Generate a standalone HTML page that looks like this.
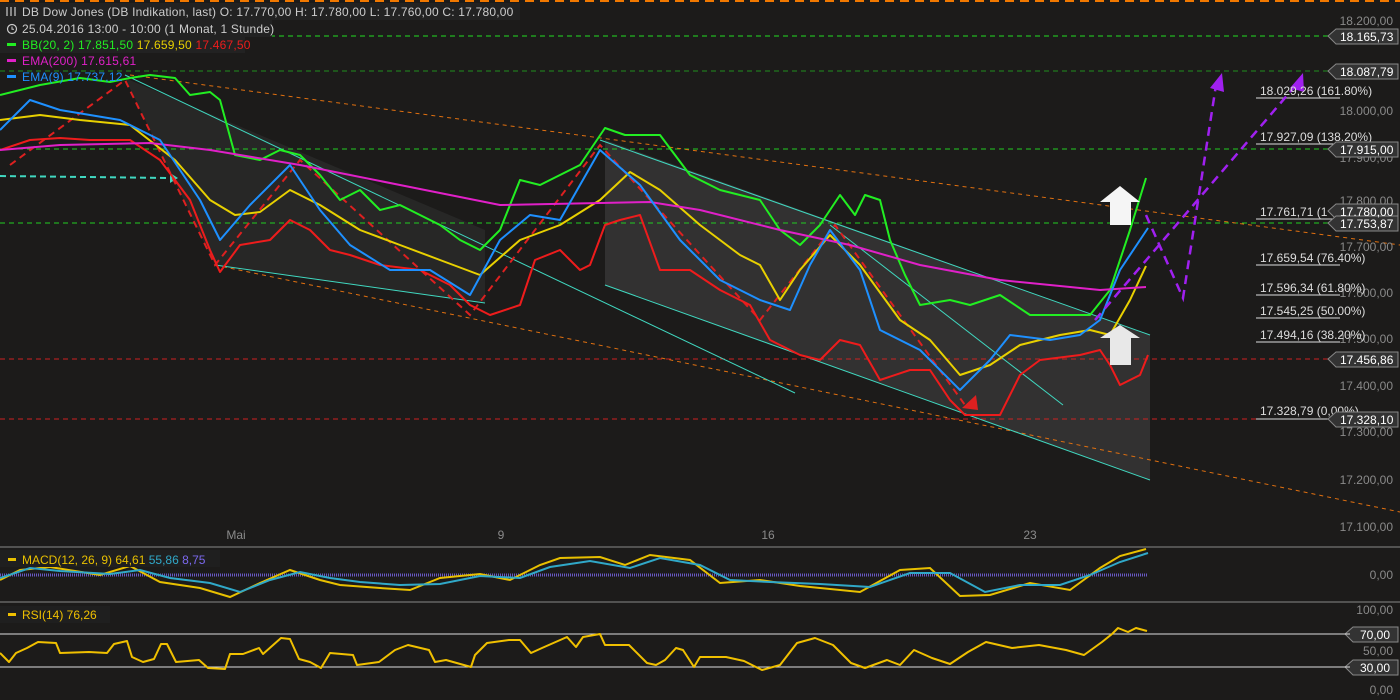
<!DOCTYPE html>
<html><head><meta charset="utf-8"><style>
html,body{margin:0;padding:0;background:#1c1b1a;overflow:hidden}
svg{display:block;font-family:"Liberation Sans",sans-serif}
</style></head><body>
<svg width="1400" height="700" viewBox="0 0 1400 700" xmlns="http://www.w3.org/2000/svg">
<rect width="1400" height="700" fill="#1c1b1a"/>
<line x1="0" y1="1" x2="1400" y2="1" stroke="#f07800" stroke-width="2" stroke-dasharray="9,6"/>
<polygon points="605,140 1150,335 1150,480 605,285" fill="#3a3a3a" opacity="0.75"/>
<polygon points="125,78 485,230 485,303 215,265" fill="#2c2c2c" opacity="0.7"/>
<g stroke-width="1" stroke-dasharray="5,4">
<line x1="0" y1="36" x2="1330" y2="36" stroke="#22dd22"/>
<line x1="0" y1="71" x2="1330" y2="71" stroke="#22dd22" stroke-opacity=".6"/>
<line x1="0" y1="149" x2="1330" y2="149" stroke="#22cc22"/>
<line x1="0" y1="223" x2="1330" y2="223" stroke="#22cc22"/>
<line x1="0" y1="359" x2="1330" y2="359" stroke="#cc2222"/>
<line x1="0" y1="419" x2="1330" y2="419" stroke="#cc2222"/>
</g>
<g stroke="#ddd" stroke-width="1">
<line x1="1256" y1="98" x2="1340" y2="98"/><line x1="1256" y1="144" x2="1340" y2="144"/>
<line x1="1256" y1="219" x2="1340" y2="219"/><line x1="1256" y1="265" x2="1340" y2="265"/>
<line x1="1256" y1="295" x2="1340" y2="295"/><line x1="1256" y1="318" x2="1340" y2="318"/>
<line x1="1256" y1="342" x2="1340" y2="342"/><line x1="1256" y1="419" x2="1340" y2="419"/>
</g>
<g stroke="#e07010" stroke-width="1" stroke-dasharray="4,4" fill="none">
<line x1="130" y1="75" x2="1400" y2="245"/>
<line x1="215" y1="265" x2="1400" y2="512"/>
</g>
<g stroke="#40d8c0" stroke-width="1" fill="none">
<line x1="125" y1="75" x2="795" y2="393"/>
<line x1="600" y1="140" x2="1150" y2="335"/>
<line x1="605" y1="285" x2="1150" y2="480"/>
<line x1="215" y1="265" x2="485" y2="303"/>
<line x1="830" y1="225" x2="1063" y2="405"/>
</g>
<line x1="0" y1="176" x2="170" y2="178" stroke="#40d8c0" stroke-width="2" stroke-dasharray="6,4"/>
<polygon points="170,173 178,178 170,183" fill="#40d8c0"/>
<polyline points="10,165 125,80 215,265 300,160 470,315 600,145 760,320 835,225 965,405" fill="none" stroke="#dd2020" stroke-width="2" stroke-dasharray="7,5"/>
<polygon points="962,408 976,395 978,410" fill="#dd2020"/>
<g fill="none" stroke-width="2" stroke-linejoin="round">
<polyline stroke="#22ee22" points="0,95 40,85 80,78 110,82 130,78 150,75 175,78 190,95 210,92 220,100 235,155 260,160 280,150 300,155 320,175 340,200 360,190 380,210 400,205 420,215 440,225 460,240 480,250 500,230 520,180 540,185 560,175 580,165 605,128 625,135 660,135 690,175 720,190 760,200 780,230 800,245 820,225 840,195 855,215 865,195 880,200 890,240 905,275 920,305 950,300 970,305 1000,295 1030,315 1060,315 1090,315 1110,290 1130,230 1146,178"/>
<polyline stroke="#ee1c1c" points="0,150 30,140 60,138 90,140 130,140 160,160 190,200 210,250 220,272 240,245 270,240 290,220 310,230 330,250 350,255 380,265 420,270 450,285 470,305 490,315 520,305 535,260 560,250 580,270 590,265 605,225 620,220 640,215 660,270 690,270 720,290 750,305 770,340 800,355 820,360 840,340 860,345 880,380 910,370 930,370 950,400 965,415 1000,415 1020,375 1040,360 1080,355 1100,350 1110,365 1120,385 1140,375 1148,355"/>
<polyline stroke="#e8d000" points="0,120 40,115 80,120 130,125 175,160 210,200 235,215 260,212 290,190 320,205 360,230 400,245 440,260 480,275 520,240 560,225 600,200 630,172 660,190 700,225 740,255 760,265 780,300 800,270 830,235 860,265 900,320 930,340 960,375 990,365 1020,345 1060,335 1090,330 1110,335 1130,300 1146,266"/>
<polyline stroke="#e020c8" points="0,150 60,145 150,143 210,150 300,165 400,185 500,205 600,203 650,202 700,210 780,230 850,245 920,265 1000,280 1050,285 1100,290 1146,287"/>
<polyline stroke="#1e90ff" points="0,130 30,100 60,110 120,120 160,140 200,200 220,240 250,205 290,165 320,210 350,245 390,270 430,270 470,295 500,240 530,215 560,220 600,150 640,185 680,240 720,280 760,300 790,310 810,265 830,230 860,270 880,330 920,350 960,390 990,360 1010,335 1050,340 1080,335 1100,320 1120,270 1148,228"/>
</g>
<g stroke="#a020f0" stroke-width="2.5" stroke-dasharray="9,6" fill="none">
<polyline points="1146,215 1183,298 1216,85"/>
<line x1="1095" y1="320" x2="1296" y2="85"/>
</g>
<polygon points="1210,88 1222,73 1224,92" fill="#a020f0"/>
<polygon points="1290,88 1303,73 1304,92" fill="#a020f0"/>
<polygon points="1100,202 1120,186 1140,202 1131,202 1131,225 1110,225 1110,202" fill="#f5f5f5"/>
<polygon points="1100,338 1120,325 1140,338 1131,338 1131,365 1110,365 1110,338" fill="#e8e8e8"/>
<g fill="#8a8a8a" font-size="12" text-anchor="end">
<text x="1393" y="25">18.200,00</text><text x="1393" y="115">18.000,00</text>
<text x="1393" y="162">17.900,00</text><text x="1393" y="205">17.800,00</text>
<text x="1393" y="251">17.700,00</text><text x="1393" y="297">17.600,00</text>
<text x="1393" y="343">17.500,00</text><text x="1393" y="390">17.400,00</text>
<text x="1393" y="436">17.300,00</text><text x="1393" y="484">17.200,00</text>
<text x="1393" y="531">17.100,00</text>
<text x="1393" y="579">0,00</text><text x="1393" y="614">100,00</text>
<text x="1393" y="655">50,00</text><text x="1393" y="694">0,00</text>
</g>
<g fill="#dddddd" font-size="12">
<text x="1260" y="95">18.029,26 (161.80%)</text><text x="1260" y="141">17.927,09 (138.20%)</text>
<text x="1260" y="216">17.761,71 (1</text><text x="1260" y="262">17.659,54 (76.40%)</text>
<text x="1260" y="292">17.596,34 (61.80%)</text><text x="1260" y="315">17.545,25 (50.00%)</text>
<text x="1260" y="339">17.494,16 (38.20%)</text><text x="1260" y="415">17.328,79 (0,00%)</text>
</g>
<g font-size="12" fill="#fff">
<g fill="#333" stroke="#888">
<polygon points="1328,36 1336,29 1398,29 1398,44 1336,44"/>
<polygon points="1328,71 1336,64 1398,64 1398,79 1336,79"/>
<polygon points="1328,149 1336,142 1398,142 1398,157 1336,157"/>
<polygon points="1328,211 1336,204 1398,204 1398,219 1336,219"/>
<polygon points="1328,223 1336,216 1398,216 1398,231 1336,231"/>
<polygon points="1328,359 1336,352 1398,352 1398,367 1336,367"/>
<polygon points="1328,419 1336,412 1398,412 1398,427 1336,427"/>
<polygon points="1345,634 1353,627 1398,627 1398,642 1353,642"/>
<polygon points="1345,667 1353,660 1398,660 1398,675 1353,675"/>
</g>
<text x="1340" y="41">18.165,73</text><text x="1340" y="76">18.087,79</text>
<text x="1340" y="154">17.915,00</text><text x="1340" y="216">17.780,00</text>
<text x="1340" y="228">17.753,87</text><text x="1340" y="364">17.456,86</text>
<text x="1340" y="424">17.328,10</text><text x="1360" y="639">70,00</text><text x="1360" y="672">30,00</text>
</g>
<rect x="0" y="3" width="520" height="17" fill="#222"/>
<rect x="0" y="20" width="272" height="17" fill="#222"/>
<rect x="0" y="37" width="245" height="16" fill="#222"/>
<g font-size="12" letter-spacing="0.2">
<text x="22" y="16" fill="#ccc">DB Dow Jones (DB Indikation, last)  O: 17.770,00  H: 17.780,00  L: 17.760,00  C: 17.780,00</text>
<g stroke="#ccc" stroke-width="1.2"><line x1="7" y1="7" x2="7" y2="16"/><line x1="11" y1="7" x2="11" y2="16"/><line x1="15" y1="7" x2="15" y2="16"/></g>
<circle cx="12" cy="29" r="4.5" fill="none" stroke="#ccc" stroke-width="1.2"/>
<path d="M12 26.5v2.8h2" fill="none" stroke="#ccc" stroke-width="1"/>
<text x="22" y="33" fill="#ccc">25.04.2016 13:00 - 10:00 (1 Monat, 1 Stunde)</text>
<rect x="7" y="43" width="9" height="3" fill="#22ee22"/>
<text x="22" y="49" fill="#22ee22">BB(20, 2)  17.851,50  <tspan fill="#e8d000">17.659,50</tspan>  <tspan fill="#ee1c1c">17.467,50</tspan></text>
<rect x="7" y="59" width="9" height="3" fill="#e020c8"/>
<text x="22" y="65" fill="#e020c8">EMA(200)  17.615,61</text>
<rect x="7" y="75" width="9" height="3" fill="#1e90ff"/>
<text x="22" y="81" fill="#1e90ff">EMA(9)  17.737,12</text>
</g>
<g fill="#8a8a8a" font-size="12" text-anchor="middle">
<text x="236" y="539">Mai</text><text x="501" y="539">9</text><text x="768" y="539">16</text><text x="1030" y="539">23</text>
</g>
<line x1="0" y1="547" x2="1400" y2="547" stroke="#888"/>
<line x1="0" y1="602" x2="1400" y2="602" stroke="#888"/>
<line x1="0" y1="575" x2="1148" y2="575" stroke="#7b68ee" stroke-width="3" stroke-dasharray="1,1" opacity=".8"/>
<g fill="none" stroke-width="2">
<polyline stroke="#e8c000" points="0,580 20,570 50,567 100,575 130,566 160,582 200,588 230,597 260,583 290,570 320,580 340,585 380,588 410,590 440,578 480,574 510,580 540,565 560,558 600,557 625,565 650,555 690,560 720,583 760,580 800,586 860,592 900,570 930,568 960,596 990,595 1030,583 1070,590 1100,568 1120,556 1146,549"/>
<polyline stroke="#30a8c8" points="0,578 30,568 60,571 110,574 140,570 170,578 210,583 240,592 270,580 300,572 330,578 360,582 400,585 440,584 480,576 520,578 550,567 590,561 630,568 660,558 700,565 730,580 770,582 820,584 870,587 910,573 950,573 985,592 1020,585 1060,585 1090,575 1120,562 1148,553"/>
</g>
<rect x="0" y="550" width="220" height="17" fill="#1f1f1f"/>
<rect x="8" y="558" width="8" height="3" fill="#e8c000"/>
<text x="22" y="564" font-size="12" fill="#e8c000">MACD(12, 26, 9)  64,61  <tspan fill="#30a8c8">55,86</tspan>  <tspan fill="#7b68ee">8,75</tspan></text>
<line x1="0" y1="634" x2="1350" y2="634" stroke="#ddd"/>
<line x1="0" y1="667" x2="1350" y2="667" stroke="#ddd"/>
<polyline fill="none" stroke="#f0c000" stroke-width="2" stroke-linejoin="round" points="0,653 9,662 16,653 27,648 38,642 56,643 60,653 89,652 107,653 114,644 127,641 132,657 143,662 154,659 161,644 167,644 176,662 199,660 208,668 225,669 230,654 243,654 259,648 263,654 281,638 290,639 299,659 310,662 321,668 330,653 353,655 357,665 379,662 395,650 408,645 429,650 435,662 446,660 471,667 475,655 487,643 509,640 520,640 531,653 542,648 567,637 576,647 583,637 600,634 605,645 629,645 647,663 656,665 665,660 676,648 683,650 694,667 700,657 726,657 744,661 762,670 780,665 797,643 815,638 833,645 851,663 865,668 887,660 900,665 914,650 932,658 950,664 968,652 986,642 1012,648 1039,645 1066,650 1084,655 1102,642 1112,634 1118,628 1128,632 1136,628 1147,631"/>
<rect x="0" y="606" width="110" height="17" fill="#1f1f1f"/>
<rect x="8" y="613" width="8" height="3" fill="#f0c000"/>
<text x="22" y="619" font-size="12" fill="#f0c000">RSI(14)  76,26</text>
</svg>
</body></html>
